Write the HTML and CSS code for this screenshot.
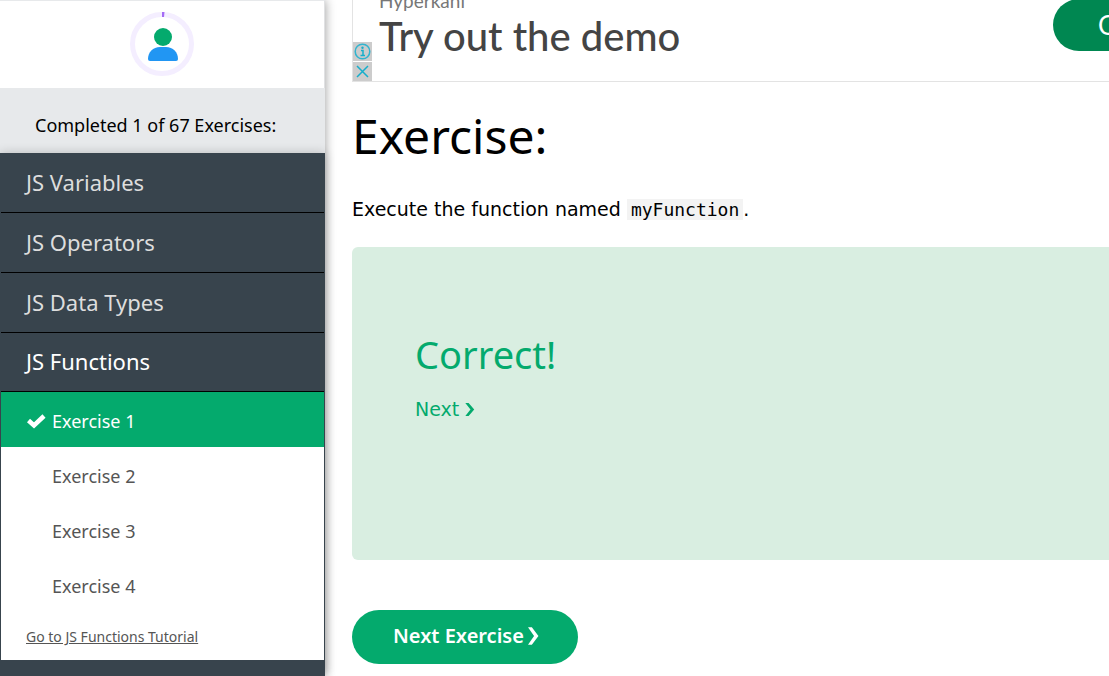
FILE: index.html
```html
<!DOCTYPE html>
<html lang="en">
<head>
<meta charset="utf-8">
<meta name="viewport" content="width=device-width, initial-scale=1">
<title>JavaScript Exercises</title>
<link rel="stylesheet" href="styles.css">
</head>
<body>
<div class="layout">
  <aside class="sidebar">
    <div class="profile">
      <svg class="avatar" viewBox="0 0 64 66" role="img" aria-label="Progress">
        <circle cx="32" cy="34" r="29.5" fill="none" stroke="#f4eeff" stroke-width="5"/>
        <path d="M32 2h2.500l-.5 5h-2z" fill="#a46bf5"/>
        <circle cx="33" cy="27" r="9" fill="#04aa6d"/>
        <path d="M18 49c0-7 5-12 12-12h6c7 0 12 5 12 12q0 2-2 2H20q-2 0-2-2z" fill="#2196f3"/>
      </svg>
    </div>
    <p class="completed">Completed 1 of 67 Exercises:</p>
    <nav class="menu">
      <a class="topic" href="#variables">JS Variables</a>
      <a class="topic" href="#operators">JS Operators</a>
      <a class="topic" href="#types">JS Data Types</a>
      <a class="topic topic-open" href="#functions">JS Functions</a>
      <div class="exercises">
        <a class="exercise exercise-current" href="#e1">
          <svg class="check" viewBox="0 0 20 16" aria-hidden="true"><path d="M2.500 7.500l5.500 5L18 3" fill="none" stroke="#fff" stroke-width="4.500"/></svg>Exercise 1</a>
        <a class="exercise" href="#e2">Exercise 2</a>
        <a class="exercise" href="#e3">Exercise 3</a>
        <a class="exercise" href="#e4">Exercise 4</a>
        <a class="tutorial" href="#tutorial">Go to JS Functions Tutorial</a>
      </div>
    </nav>
  </aside>
  <main class="main">
    <section class="ad">
      <div class="ad-tools">
        <button class="ad-tool" aria-label="Ad information"><svg viewBox="0 0 19 19"><circle cx="9.500" cy="9.500" r="7.300" fill="none" stroke="#32b4cf" stroke-width="1.500"/><path d="M8 8.500h2v5M7.500 13.500h4.500" fill="none" stroke="#16aecb" stroke-width="1.500"/><circle cx="9.500" cy="5.800" r="1.200" fill="#16aecb"/></svg></button>
        <button class="ad-tool" aria-label="Close ad"><svg viewBox="0 0 19 19"><path d="M4 4l11 11M15 4L4 15" fill="none" stroke="#16aecb" stroke-width="1.500"/></svg></button>
      </div>
      <div class="ad-copy">
        <div class="ad-brand">Hyperkani</div>
        <div class="ad-title">Try out the demo</div>
      </div>
      <button class="ad-open">Open</button>
    </section>
    <h1 class="heading">Exercise:</h1>
    <p class="task">Execute the function named <code class="code">myFunction</code>.</p>
    <section class="result">
      <h2 class="result-title">Correct!</h2>
      <a class="result-next" href="#next">Next <svg class="chevron" viewBox="0 0 10 16" aria-hidden="true"><path d="M0 1h3.500l6 7-6 7H0l5.500-7z" fill="currentColor"/></svg></a>
    </section>
    <button class="next">Next Exercise <svg class="chevron chevron-large" viewBox="0 0 10 16" aria-hidden="true"><path d="M0 0h3.500l6 8-6 8H0l5.500-8z" fill="currentColor"/></svg></button>
  </main>
</div>
</body>
</html>
```

FILE: styles.css
```css
* { box-sizing: border-box; }
body { margin: 0; background: #fff; color: #000; font-family: "Noto Sans", sans-serif; }
button { border: 0; padding: 0; font: inherit; cursor: pointer; }
.layout { display: grid; grid-template-columns: 325px minmax(0, 1fr); height: 100vh; overflow: hidden; }
.sidebar { display: flex; flex-direction: column; background: #38444d; box-shadow: 0 0 10px rgba(0, 0, 0, .4); }
.profile { display: flex; justify-content: center; height: 88px; padding-top: 9px; border-top: 1px solid #e7e9eb; border-right: 1px solid #e0e1e3; background: #fff; }
.avatar { width: 64px; height: 66px; }
.completed { margin: 0; padding: 23px 35px 14px; background: #e7e9eb; font-size: 18px; line-height: 28px; }
.menu { display: flex; flex-direction: column; flex: 1; padding: 0 1px; background: #38444d; box-shadow: 0 0 10px rgba(0, 0, 0, .2); }
.topic { padding: 11px 25px 12px; border-bottom: 1px solid #000; color: #ddd; font-size: 22px; line-height: 36px; text-decoration: none; }
.topic-open { padding: 10px 25px 12px; color: #fff; }
.exercises { display: flex; flex-direction: column; align-items: stretch; background: #fff; padding-bottom: 12px; }
.exercise { display: flex; align-items: center; padding: 16px 25px 13px 51px; color: #555; font-size: 18px; line-height: 26px; text-decoration: none; }
.exercise-current { padding-left: 25px; background: #04aa6d; color: #fff; }
.check { width: 20px; height: 16px; margin-right: 6px; }
.tutorial { align-self: flex-start; margin-left: 25px; padding-top: 14px; color: #555; font-size: 14px; line-height: 22px; }
.main { min-width: 0; padding-left: 27px; }
.ad { position: relative; display: flex; justify-content: space-between; height: 82px; border: solid #e3e3e3; border-width: 0 0 1px 1px; overflow: hidden; }
.ad-tools { position: absolute; left: 0; bottom: 0; display: grid; gap: 1px; }
.ad-tool { width: 19px; height: 19px; background: #ccc; }
.ad-tool svg { display: block; width: 19px; height: 19px; }
.ad-copy { padding-left: 26px; margin-top: -11px; font-family: Lato, sans-serif; }
.ad-brand { color: #777; font-size: 19px; line-height: 24px; }
.ad-title { color: #444; font-size: 40px; font-weight: 500; line-height: 46px; }
.ad-open { flex: none; width: 150px; height: 52px; margin: -1px -94px 0 0; padding-left: 45px; border-radius: 26px; background: #008751; color: #fff; font-family: Lato, sans-serif; font-size: 26px; text-align: left; }
.heading { margin: 16px 0 0; font-size: 48px; font-weight: 400; line-height: 76px; }
.task { margin: 20px 0 0; font-family: "DejaVu Sans", sans-serif; font-size: 19px; line-height: 30px; }
.code { padding: 0 4px; background: #f3f3f3; font-family: "DejaVu Sans Mono", monospace; font-size: 18px; }
.result { min-height: 313px; margin-top: 22px; padding: 79px 63px; border-radius: 6px 0 0 6px; background: #d9eee1; color: #04aa6d; }
.result-title { margin: 0; font-size: 38px; font-weight: 400; line-height: 56px; }
.result-next { display: inline-flex; align-items: center; gap: 6px; margin-top: 12px; color: inherit; font-family: "DejaVu Sans", sans-serif; font-size: 19px; line-height: 30px; text-decoration: none; }
.chevron { width: 10px; height: 15px; }
.next { display: inline-flex; align-items: center; gap: 4px; margin-top: 50px; padding: 12px 39px 14px 41px; border-radius: 27px; background: #04aa6d; color: #fff; font-size: 20px; font-weight: 600; line-height: 28px; }
.chevron-large { width: 11px; height: 18px; }
```
